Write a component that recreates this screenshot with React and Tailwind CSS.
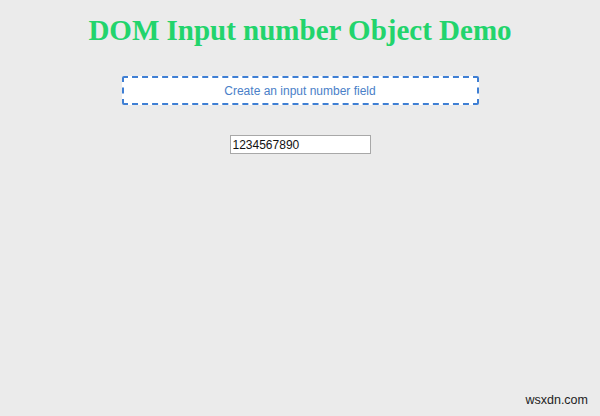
export default function App() {
  return (
    <div className="relative w-[600px] h-[416px] bg-[#ebebeb] flex flex-col items-center overflow-hidden">
      <h1 className="mt-[12px] text-[29px] leading-[36px] font-bold text-[#22d46c] font-['Liberation_Serif',serif]">
        DOM Input number Object Demo
      </h1>
      <button className="mt-[28px] w-[357px] h-[29px] bg-white border-2 border-dashed border-[#3f7fd4] rounded-[2px] text-[12px] text-[#4a80c8] font-['Liberation_Sans',sans-serif]">
        Create an input number field
      </button>
      <input
        type="text"
        defaultValue="1234567890"
        className="mt-[30px] w-[141px] h-[19px] bg-white border border-[#a8a8a8] px-[2px] text-[12px] text-[#111] font-['Liberation_Sans',sans-serif] outline-none"
      />
      <span className="absolute right-[12px] bottom-[6px] text-[12.5px] text-[#222] font-['Liberation_Sans',sans-serif]">
        wsxdn.com
      </span>
    </div>
  );
}
